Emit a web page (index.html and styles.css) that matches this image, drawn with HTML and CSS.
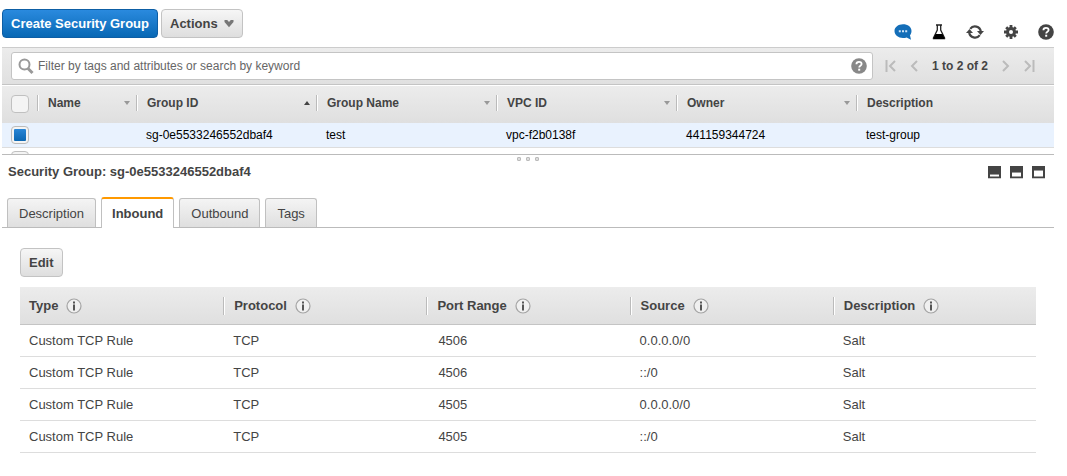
FILE: index.html
```html
<!DOCTYPE html>
<html lang="en">
<head>
<meta charset="utf-8">
<title>Security Groups</title>
<link rel="stylesheet" href="styles.css">
</head>
<body>
<svg class="defs" aria-hidden="true">
  <symbol id="info" viewBox="0 0 16 16">
    <circle cx="8" cy="8" r="7" fill="#f0f0f0" stroke="#a4a4a4" stroke-width="1.2"/>
    <path d="M7 3.500h2v2H7zM7 6.500h2v6H7z" fill="#555"/>
  </symbol>
  <symbol id="help" viewBox="0 0 16 16">
    <circle cx="8" cy="8" r="7.8" fill="currentColor"/>
    <path d="M5.4 6.3C5.4 4.6 6.6 3.9 8 3.9s2.6.8 2.6 2.2c0 1.7-2.4 1.7-2.4 3.4" fill="none" stroke="#fff" stroke-width="1.8"/>
    <rect x="7.2" y="10.7" width="2" height="2" fill="#fff"/>
  </symbol>
</svg>
<main class="console">
  <header class="toolbar">
    <div class="actions">
      <button class="btn primary" type="button">Create Security Group</button>
      <button class="btn" type="button">Actions
        <svg width="10" height="8" viewBox="0 0 10 8"><path d="M.5 0h2.700L5 2 6.800 0h2.700v2L5 7.200.5 2z" fill="#777"/></svg>
      </button>
    </div>
    <div class="tools">
      <button class="icon" type="button" aria-label="Feedback"><svg width="18" height="16" viewBox="0 0 18 16"><path d="M9 .3c4.700 0 8.500 2.700 8.500 6.700 0 2.400-1 3.600-1.500 4.300l1 4.400-4.400-2.200c-1 .4-2.300.5-3.600.5C4.300 14 .5 11.100.5 7.100S4.300.3 9 .3z" fill="#146eb8"/><path d="M4.800 6.200h2v2h-2zM8 6.200h2v2H8zM11.200 6.200h2v2h-2z" fill="#cfe4f7"/></svg></button>
      <button class="icon" type="button" aria-label="Experiments"><svg width="14" height="16" viewBox="0 0 14 16"><path d="M4 1h6M5.300 1v5L1.500 13.800h11L8.700 6V1" fill="none" stroke="#222" stroke-width="1.300"/><path d="M3.500 10h7l2.700 5.300H.800z" fill="#000"/></svg></button>
      <button class="icon" type="button" aria-label="Refresh"><svg width="18" height="16" viewBox="0 0 18 16"><path d="M4.200 4.800A5.900 5.900 0 0 1 14.800 7.500M13.800 11.200A5.900 5.900 0 0 1 3.200 8.500" fill="none" stroke="#444" stroke-width="2.200"/><path d="M11 7h7l-3.500 4zM0 9h7L3.500 5z" fill="#444"/></svg></button>
      <button class="icon" type="button" aria-label="Settings"><svg width="14" height="14" viewBox="0 0 14 14"><g stroke="#444" stroke-width="2.800"><path d="M7 0v14M0 7h14M2.200 2.200l9.600 9.600M11.800 2.200l-9.600 9.600"/></g><circle cx="7" cy="7" r="4.900" fill="#444"/><circle cx="7" cy="7" r="2" fill="#fff"/></svg></button>
      <button class="icon help" type="button" aria-label="Help"><svg width="16" height="16"><use href="#help"/></svg></button>
    </div>
  </header>

  <div class="filterbar">
    <div class="search">
      <svg width="16" height="17" viewBox="0 0 16 17"><circle cx="6.500" cy="6.500" r="5" fill="none" stroke="#999" stroke-width="2"/><path d="M10 10.500l4.500 4.500" stroke="#999" stroke-width="3"/></svg>
      <input type="text" aria-label="Filter" placeholder="Filter by tags and attributes or search by keyword">
      <button class="icon searchhelp" type="button" aria-label="Search help"><svg width="16" height="16"><use href="#help"/></svg></button>
    </div>
    <nav class="pager" aria-label="Pages">
      <button class="icon" type="button" aria-label="First"><svg width="11" height="12" viewBox="0 0 11 12"><path d="M1.500 0v12M10 1L5 6l5 5"/></svg></button>
      <button class="icon" type="button" aria-label="Previous"><svg width="8" height="12" viewBox="0 0 8 12"><path d="M7 1L2 6l5 5"/></svg></button>
      <span class="count">1 to 2 of 2</span>
      <button class="icon" type="button" aria-label="Next"><svg width="8" height="12" viewBox="0 0 8 12"><path d="M1 1l5 5-5 5"/></svg></button>
      <button class="icon" type="button" aria-label="Last"><svg width="11" height="12" viewBox="0 0 11 12"><path d="M1 1l5 5-5 5M9.500 0v12"/></svg></button>
    </nav>
  </div>

  <section class="listpane">
    <table class="groups">
      <colgroup><col class="c-check"><col class="c-name"><col class="c-wide"><col class="c-wide"><col class="c-wide"><col class="c-wide"><col></colgroup>
      <thead>
        <tr>
          <th><input type="checkbox" aria-label="Select all"></th>
          <th><div class="head">Name<i class="sort"></i></div></th>
          <th><div class="head">Group ID<i class="sort up"></i></div></th>
          <th><div class="head">Group Name<i class="sort"></i></div></th>
          <th><div class="head">VPC ID<i class="sort"></i></div></th>
          <th><div class="head">Owner<i class="sort"></i></div></th>
          <th><div class="head">Description</div></th>
        </tr>
      </thead>
      <tbody>
        <tr class="selected"><td><input type="checkbox" checked aria-label="Select test"></td><td></td><td>sg-0e5533246552dbaf4</td><td>test</td><td>vpc-f2b0138f</td><td>441159344724</td><td>test-group</td></tr>
        <tr><td><input type="checkbox" aria-label="Select group"></td><td></td><td></td><td></td><td></td><td></td><td></td></tr>
      </tbody>
    </table>
  </section>

  <section class="details">
    <div class="grip"><i></i><i></i><i></i></div>
    <div class="titlebar">
      <h1>Security Group: sg-0e5533246552dbaf4</h1>
      <div class="sizes">
        <button class="icon" type="button" aria-label="Small pane"><svg width="13" height="13" viewBox="0 0 13 13"><path d="M0 12h13v1H0z" fill="#ccc"/><path d="M0 0h13v12H0z" fill="#444"/><path d="M2 8h9v1H2z" fill="#999"/><path d="M2 9h9v1.500H2z" fill="#fff"/></svg></button>
        <button class="icon" type="button" aria-label="Medium pane"><svg width="13" height="13" viewBox="0 0 13 13"><path d="M0 12h13v1H0z" fill="#ccc"/><path d="M0 0h13v12H0z" fill="#444"/><path d="M2 6h9v1H2z" fill="#999"/><path d="M2 7h9v3.500H2z" fill="#fff"/></svg></button>
        <button class="icon" type="button" aria-label="Large pane"><svg width="13" height="13" viewBox="0 0 13 13"><path d="M0 12h13v1H0z" fill="#ccc"/><path d="M0 0h13v12H0z" fill="#444"/><path d="M2 4h9v1H2z" fill="#999"/><path d="M2 5h9v5.500H2z" fill="#fff"/></svg></button>
      </div>
    </div>
    <div class="tabs" role="tablist">
      <button class="tab" type="button" role="tab">Description</button>
      <button class="tab active" type="button" role="tab" aria-selected="true">Inbound</button>
      <button class="tab" type="button" role="tab">Outbound</button>
      <button class="tab" type="button" role="tab">Tags</button>
    </div>
    <div class="panel">
      <button class="btn" type="button">Edit</button>
      <table class="rules">
        <thead>
          <tr>
            <th><div class="head">Type<svg width="16" height="16"><use href="#info"/></svg></div></th>
            <th><div class="head">Protocol<svg width="16" height="16"><use href="#info"/></svg></div></th>
            <th><div class="head">Port Range<svg width="16" height="16"><use href="#info"/></svg></div></th>
            <th><div class="head">Source<svg width="16" height="16"><use href="#info"/></svg></div></th>
            <th><div class="head">Description<svg width="16" height="16"><use href="#info"/></svg></div></th>
          </tr>
        </thead>
        <tbody>
          <tr><td>Custom TCP Rule</td><td>TCP</td><td class="port">4506</td><td>0.0.0.0/0</td><td>Salt</td></tr>
          <tr><td>Custom TCP Rule</td><td>TCP</td><td class="port">4506</td><td>::/0</td><td>Salt</td></tr>
          <tr><td>Custom TCP Rule</td><td>TCP</td><td class="port">4505</td><td>0.0.0.0/0</td><td>Salt</td></tr>
          <tr><td>Custom TCP Rule</td><td>TCP</td><td class="port">4505</td><td>::/0</td><td>Salt</td></tr>
        </tbody>
      </table>
    </div>
  </section>
</main>
</body>
</html>
```
FILE: styles.css
```css
* { box-sizing: border-box; }
body { margin: 0; background: #fff; color: #444; font: 13px/16px "Liberation Sans", Arial, sans-serif; }
button, input { font: inherit; color: inherit; margin: 0; }
svg { display: block; flex: none; }
.defs { display: none; }
.console { margin: 0 13px 0 2px; }

.icon { display: flex; padding: 0; border: 0; background: none; }
.btn { display: flex; align-items: center; gap: 6px; height: 29px; padding: 0 8px; border: 1px solid #c3c3c3; border-radius: 4px; background: linear-gradient(#f6f6f6, #dedede); font-weight: bold; white-space: nowrap; }
.btn.primary { border-color: #0d5ea5; background: linear-gradient(#2a8ade, #0868b5); color: #fff; }

.toolbar { display: flex; justify-content: space-between; height: 47px; padding-top: 9px; }
.actions { display: flex; gap: 3px; }
.tools { display: flex; align-items: center; gap: 20px; height: 45px; }
.tools .help { color: #444; }

.filterbar { display: flex; align-items: center; gap: 12px; height: 38px; padding: 0 19px 0 9px; border-top: 1px solid #ccc; border-bottom: 1px solid #c4c4c4; background: linear-gradient(#ececec, #e0e0e0); }
.search { display: flex; align-items: center; flex: 1; gap: 4px; height: 28px; padding: 0 5px 0 6px; border: 1px solid #c4c4c4; border-radius: 3px; background: #fff; }
.search input { flex: 1; min-width: 0; padding: 0; border: 0; outline: 0; background: none; font-size: 12px; }
.search input::placeholder { color: #666; opacity: 1; }
.searchhelp { color: #888; }
.pager { display: flex; align-items: center; gap: 14px; font-size: 12px; font-weight: bold; white-space: nowrap; }
.pager path { fill: none; stroke: #bbb; stroke-width: 2; }

table { width: 100%; table-layout: fixed; border-collapse: separate; border-spacing: 0; }
th { text-align: left; padding: 0; }
td { padding: 0 10px; white-space: nowrap; }
thead { background: linear-gradient(#ececec, #dfdfdf); }
.head { display: flex; align-items: center; }
th + th .head { border-left: 1px solid #bbb; box-shadow: inset 1px 0 #fff; }

.listpane { height: 70px; overflow: hidden; padding-top: 1px; border-bottom: 1px solid #bbb; font-size: 12px; }
.groups th { height: 37px; padding-bottom: 3px; }
.groups th:first-child { padding: 0 0 2px 9px; }
.groups td:first-child { padding: 0 0 0 9px; }
.groups .head { justify-content: space-between; height: 16px; padding: 0 6px 0 10px; }
.c-check { width: 35px; }
.c-name { width: 99px; }
.c-wide { width: 180px; }
.groups td { height: 25px; border-bottom: 1px solid #ddd; color: #000; }
.selected { background: #e9f2fe; }
.sort { border: 3px solid transparent; border-top: 4px solid #999; border-bottom: 0; }
.sort.up { border-top: 0; border-bottom: 4px solid #444; }
.groups input { appearance: none; display: block; width: 18px; height: 18px; border: 1px solid #c0c0c0; border-radius: 4px; background: #f4f4f4; }
.groups input:checked { border-color: #bbb; background: linear-gradient(#2a86d6, #0c67b2) content-box, #f4f4f4; padding: 2px; }

.details { position: relative; }
.grip { position: absolute; top: 2px; left: 0; right: 0; display: flex; justify-content: center; gap: 5px; }
.grip i { width: 4px; height: 4px; border: 1px solid #bbb; border-radius: 1px; background: #ddd; }
.titlebar { display: flex; justify-content: space-between; align-items: center; height: 34px; padding: 0 9px 0 6px; }
h1 { margin: 0; font-size: 13px; }
.sizes { display: flex; gap: 9px; }
.tabs { display: flex; align-items: flex-end; gap: 5px; height: 39px; padding-left: 5px; border-bottom: 1px solid #bbb; }
.tab { height: 29px; padding: 2px 11px 0; border: 1px solid #c0c0c0; border-bottom: 0; border-radius: 3px 3px 0 0; background: linear-gradient(#f4f4f4, #dfdfdf); }
.tab.active { height: 31px; margin-bottom: -1px; padding: 1px 10px 0; border-top: 2px solid #f90; background: #fff; font-weight: bold; }
.panel { padding: 20px 18px 0; }
.rules { margin-top: 10px; }
.rules th { height: 38px; border-bottom: 1px solid #c4c4c4; }
.rules .head { gap: 8px; height: 18px; padding-left: 10px; }
.rules th:first-child .head { padding-left: 9px; }
.rules td { height: 32px; border-bottom: 1px solid #ddd; }
.rules td:first-child { padding-left: 9px; }
.rules .port { padding-left: 12px; }
```
